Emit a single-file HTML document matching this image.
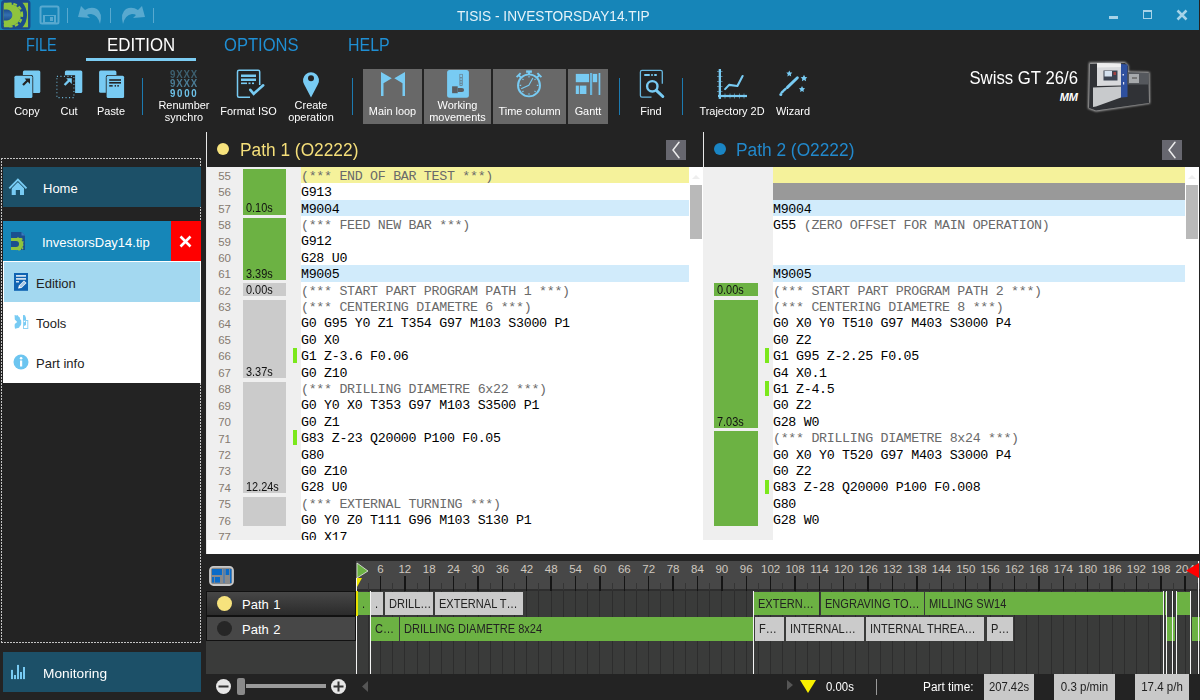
<!DOCTYPE html><html><head><meta charset="utf-8"><style>
*{margin:0;padding:0;box-sizing:border-box}
html,body{width:1200px;height:700px;overflow:hidden;background:#232323;font-family:"Liberation Sans",sans-serif;position:relative}
.a{position:absolute}
.t{position:absolute;white-space:nowrap;color:#fff}
.rl{position:absolute;font-size:11.5px;color:#fff;text-align:center;white-space:nowrap;line-height:12px;transform:scaleX(0.95)}
.btn{position:absolute;background:#686868;top:69px;height:55px}
.sep{position:absolute;top:78px;width:1px;height:37px;background:#1c7ab0}
.code{position:absolute;font-family:"Liberation Mono",monospace;font-size:13.3px;letter-spacing:-0.3px;line-height:16.4px;white-space:pre;color:#000}
.cm{color:#6a6a6a}
.ln{position:absolute;font-size:11.5px;color:#857a70;text-align:right;width:24px;line-height:16.4px}
.tb{position:absolute;font-size:12.5px;color:#111;line-height:13px;transform:scaleX(0.875);transform-origin:0 0;white-space:nowrap}
.tlbl{position:absolute;font-size:13px;color:#222;white-space:nowrap;line-height:24px;transform:scaleX(0.85);transform-origin:0 0}
</style></head><body>
<div class="a" style="left:0;top:0;width:1199px;height:30px;background:#1685b8"></div>
<svg class="a" style="left:0;top:0" width="31" height="31" viewBox="0 0 31 31">
<defs><clipPath id="lc"><rect x="3.7" y="2.5" width="24.5" height="25"/></clipPath>
<linearGradient id="lg" x1="0" y1="0" x2="0" y2="1"><stop offset="0" stop-color="#1e4f8e"/><stop offset="0.5" stop-color="#3370b0"/><stop offset="1" stop-color="#1e4f8e"/></linearGradient></defs>
<rect x="1" y="0" width="29.5" height="29.5" rx="3.5" fill="#1b4c8c"/>
<g clip-path="url(#lc)">
<rect x="3.7" y="2.5" width="8" height="25" fill="#8fc43e"/>
<circle cx="10.5" cy="15" r="10.6" fill="#8fc43e"/>
<circle cx="10.5" cy="15" r="11.6" fill="none" stroke="#8fc43e" stroke-width="2.2" stroke-dasharray="3.7 2.2" stroke-dashoffset="1.8"/>
<path d="M0 9.6 H7 A5.4 5.4 0 0 1 7 20.4 H0 Z" fill="url(#lg)"/>
<path d="M22.3 2.5 A19 19 0 0 1 22.3 27.5 L28.2 27.5 L28.2 2.5 Z" fill="#8fc43e"/>
</g>
</svg>
<svg class="a" style="left:39px;top:5px" width="22" height="21" viewBox="0 0 22 21">
<rect x="1.5" y="1.5" width="18" height="17" rx="1.5" fill="none" stroke="#58a9cf" stroke-width="2"/>
<rect x="4" y="10" width="13" height="8" fill="#58a9cf"/>
<rect x="6" y="11" width="9" height="6" fill="#1685b8"/>
<rect x="11" y="12" width="3" height="4" fill="#58a9cf"/>
</svg>
<div class="a" style="left:67px;top:8px;width:1px;height:15px;background:#58a9cf"></div>
<div class="a" style="left:110px;top:8px;width:1px;height:15px;background:#58a9cf"></div>
<div class="a" style="left:153px;top:8px;width:1px;height:15px;background:#58a9cf"></div>
<svg class="a" style="left:77px;top:5px" width="26" height="20" viewBox="0 0 26 20">
<path d="M1 12 L4 1 L8 5 Q14 1 20 4 Q26 8 23 19 Q21 10 14 9 Q11 9 10 10 L13 13 Z" fill="#58a9cf"/>
</svg>
<svg class="a" style="left:120px;top:5px" width="26" height="20" viewBox="0 0 26 20">
<g transform="translate(26,0) scale(-1,1)"><path d="M1 12 L4 1 L8 5 Q14 1 20 4 Q26 8 23 19 Q21 10 14 9 Q11 9 10 10 L13 13 Z" fill="#58a9cf"/></g>
</svg>
<div class="t" style="left:457px;top:7px;font-size:15px;color:#e6f3f9;line-height:17px;transform:scaleX(0.912);transform-origin:0 0">TISIS - INVESTORSDAY14.TIP</div>
<div class="a" style="left:1109px;top:16px;width:9px;height:3px;background:#a6d3e8"></div>
<div class="a" style="left:1143px;top:10px;width:9px;height:9px;border:1px solid #a6d3e8;border-top-width:2.5px"></div>
<svg class="a" style="left:1176px;top:9px" width="12" height="12" viewBox="0 0 12 12"><path d="M1.5 1.5 L10.5 10.5 M10.5 1.5 L1.5 10.5" stroke="#a6d3e8" stroke-width="2.5"/></svg>
<div class="t" style="left:26px;top:36px;font-size:18px;color:#1f8fd4;line-height:18px;transform:scaleX(0.81);transform-origin:0 0">FILE</div>
<div class="t" style="left:107px;top:36px;font-size:18px;color:#ffffff;line-height:18px;transform:scaleX(0.935);transform-origin:0 0">EDITION</div>
<div class="t" style="left:224px;top:36px;font-size:18px;color:#1f8fd4;line-height:18px;transform:scaleX(0.92);transform-origin:0 0">OPTIONS</div>
<div class="t" style="left:348px;top:36px;font-size:18px;color:#1f8fd4;line-height:18px;transform:scaleX(0.885);transform-origin:0 0">HELP</div>
<div class="a" style="left:86px;top:58px;width:110px;height:3px;background:#7ccdf3"></div>
<div class="btn" style="left:363px;width:59px"></div>
<div class="btn" style="left:424px;width:67px"></div>
<div class="btn" style="left:493px;width:73px"></div>
<div class="btn" style="left:568px;width:40px"></div>
<div class="sep" style="left:142px"></div>
<div class="sep" style="left:352px"></div>
<div class="sep" style="left:619px"></div>
<div class="sep" style="left:682px"></div>
<svg class="a" style="left:0;top:60px" width="830" height="45" viewBox="0 60 830 45">
<!-- copy -->
<rect x="22.9" y="70.6" width="17.4" height="22.4" rx="1.5" fill="#78cbf3"/>
<rect x="13.6" y="75" width="19.6" height="23.9" rx="2" fill="#232323"/>
<rect x="14.4" y="75.8" width="18" height="22.3" rx="1.5" fill="#78cbf3"/>
<path d="M23 85 L28.3 79.7" stroke="#232323" stroke-width="2.2"/>
<path d="M24.6 78.5 L30 78.5 L30 83.9 Z" fill="#232323"/>
<!-- cut -->
<rect x="64.9" y="70.6" width="17.4" height="22.4" rx="1.5" fill="#78cbf3"/>
<rect x="55.6" y="75.2" width="19.5" height="23.5" fill="#232323"/>
<rect x="56.9" y="76.4" width="17" height="21.2" fill="none" stroke="#78cbf3" stroke-width="1.1" stroke-dasharray="1.1 2.4" opacity="0.85"/>
<path d="M64.6 85 L69.9 79.7" stroke="#78cbf3" stroke-width="2.4"/>
<path d="M66.2 78.3 L71.8 78.3 L71.8 83.9 Z" fill="#78cbf3"/>
<!-- paste -->
<rect x="99.1" y="70.6" width="17.3" height="22.1" rx="1.5" fill="#78cbf3"/>
<rect x="105.8" y="75" width="19.1" height="23.7" rx="2" fill="#232323"/>
<rect x="106.6" y="75.8" width="17.5" height="22.1" rx="1.5" fill="#78cbf3"/>
<rect x="109.2" y="79.2" width="11.8" height="1.6" fill="#232323"/>
<rect x="109.2" y="82" width="11.8" height="1.6" fill="#232323"/>
<rect x="109.2" y="85.1" width="3.5" height="1.5" fill="#232323"/>
<rect x="114.6" y="85.1" width="1.4" height="1.5" fill="#232323"/>
<rect x="117.3" y="85.1" width="1.6" height="1.5" fill="#232323"/>
<!-- format iso -->
<path d="M250 97.3 H239 Q237.5 97.3 237.5 95.8 V71.8 Q237.5 70.3 239 70.3 H258.2 Q259.7 70.3 259.7 71.8 V85" fill="none" stroke="#78cbf3" stroke-width="1.5"/>
<rect x="241" y="74.5" width="15" height="2.5" fill="#78cbf3"/>
<rect x="241" y="78.5" width="15" height="2.5" fill="#78cbf3"/>
<rect x="241" y="82.5" width="6" height="1.6" fill="#78cbf3"/>
<rect x="248.5" y="82.5" width="2" height="1.6" fill="#78cbf3"/>
<rect x="252" y="82.5" width="2" height="1.6" fill="#78cbf3"/>
<path d="M250.3 89.8 L253.7 93.8 L263.2 85.3" stroke="#78cbf3" stroke-width="2.6" fill="none" stroke-linecap="round"/>
<!-- pin -->
<path d="M311 97.5 L304.2 84.5 A8 8 0 1 1 317.8 84.5 Z" fill="#78cbf3"/>
<circle cx="311" cy="78.3" r="3" fill="#232323"/>
<!-- main loop -->
<path d="M381 72 L391.8 78.3 L383.5 83.3 L383.5 96 L381 96 Z" fill="#78cbf3"/>
<path d="M405 72 L394.3 78.3 L402.5 83.3 L402.5 96 L405 96 Z" fill="#78cbf3"/>
<!-- working movements -->
<rect x="447.1" y="70.1" width="21.8" height="27.6" rx="2.5" fill="#78cbf3"/>
<rect x="452.1" y="86.3" width="5.6" height="6.9" fill="#5a5e62"/>
<path d="M457.7 87.9 H462 A2.05 2.05 0 0 1 462 92 H457.7 Z" fill="#5a5e62"/>
<rect x="459.8" y="74.3" width="2.6" height="11" fill="none" stroke="#6a7f8a" stroke-width="0.7"/>
<path d="M461 77 V86" stroke="#5a5e62" stroke-width="1.1" stroke-dasharray="1.6 1.2"/>
<!-- stopwatch -->
<circle cx="529" cy="85.4" r="11" fill="none" stroke="#78cbf3" stroke-width="1.9"/>
<rect x="526.1" y="70.4" width="5.8" height="2.4" fill="#78cbf3"/>
<rect x="528" y="72" width="2" height="3" fill="#78cbf3"/>
<path d="M516.6 77.2 L520.6 73.2 M518.6 75.2 L521.3 77.9 M541.4 77.2 L537.4 73.2 M539.4 75.2 L536.7 77.9" stroke="#78cbf3" stroke-width="1.9"/>
<path d="M529 76 V77.6 M529 93.2 V94.8 M519.6 85.4 H521.2 M536.8 85.4 H538.4 M522.4 78.8 L523.5 79.9 M535.6 78.8 L534.5 79.9 M522.4 92 L523.5 90.9 M535.6 92 L534.5 90.9" stroke="#78cbf3" stroke-width="1.1"/>
<path d="M521.2 88.8 L528.8 85.3 L532.9 78.1" stroke="#78cbf3" stroke-width="1.1" fill="none"/>
<!-- gantt -->
<rect x="575.8" y="73.9" width="13.3" height="8.3" fill="#78cbf3"/>
<rect x="575.8" y="85.6" width="3.1" height="8.4" fill="#78cbf3"/>
<rect x="579.8" y="85.6" width="6.6" height="8.4" fill="#78cbf3"/>
<rect x="590" y="73" width="2.2" height="22" fill="#6bb5da"/>
<rect x="592.8" y="73.9" width="4.4" height="8.3" fill="#78cbf3"/>
<rect x="598.6" y="73" width="1.7" height="22" fill="#78cbf3"/>
<!-- find -->
<path d="M651.5 97.1 H642 Q640.4 97.1 640.4 95.5 V72 Q640.4 70.4 642 70.4 H660.7 Q662.3 70.4 662.3 72 V83.7" fill="none" stroke="#68b8e0" stroke-width="1.3"/>
<rect x="644" y="74" width="6" height="2" rx="1" fill="#78cbf3"/>
<rect x="651" y="74" width="2" height="2" rx="1" fill="#78cbf3"/>
<rect x="654" y="74" width="3" height="2" rx="1" fill="#78cbf3"/>
<circle cx="652.3" cy="86.3" r="5.2" fill="none" stroke="#78cbf3" stroke-width="2.4"/>
<path d="M656.3 90.3 L662.8 96.5" stroke="#78cbf3" stroke-width="3" stroke-linecap="round"/>
<!-- trajectory -->
<rect x="718.7" y="69" width="2.3" height="29.9" fill="#78cbf3"/>
<rect x="718" y="94.9" width="29" height="2.2" fill="#78cbf3"/>
<path d="M717 71.5 H722.5 M717 76.5 H722.5 M717 81.5 H722.5 M717 86.5 H722.5 M717 91.5 H722.5 M725 93.5 V98.5 M730 93.5 V98.5 M734.5 93.5 V98.5 M739.5 93.5 V98.5 M744 93.5 V98.5" stroke="#78cbf3" stroke-width="0.9" opacity="0.6"/>
<path d="M725.1 89.1 L729.1 84.9 L737.4 86 L742.6 76" stroke="#78cbf3" stroke-width="2.1" fill="none" stroke-linecap="round" stroke-linejoin="round"/>
<!-- wizard -->
<path d="M787.4 87.4 L797.4 77.7" stroke="#78cbf3" stroke-width="2.9" stroke-linecap="round"/>
<path d="M783.6 90.6 L785.6 88.8 M781.6 92.6 L782.8 91.5" stroke="#78cbf3" stroke-width="2.4" stroke-linecap="round"/>
<circle cx="780.8" cy="94.5" r="1.5" fill="#78cbf3"/>
<path d="M789.3 70.4 L790.3 72.4 L792.3 72.6 L790.8 74.2 L791.2 76.4 L789.3 75.3 L787.4 76.4 L787.8 74.2 L786.3 72.6 L788.3 72.4 Z" fill="#78cbf3"/>
<path d="M804 74.8 L805.1 77 L807.3 77.2 L805.7 78.9 L806.1 81.2 L804 80.1 L801.9 81.2 L802.3 78.9 L800.7 77.2 L802.9 77 Z" fill="#78cbf3"/>
<path d="M802 86.1 L803 88.1 L805 88.3 L803.5 89.9 L803.9 92.1 L802 91 L800.1 92.1 L800.5 89.9 L799 88.3 L801 88.1 Z" fill="#78cbf3"/>
</svg>
<div class="a" style="left:170px;top:70px;width:40px;font-family:'Liberation Sans';font-weight:bold;font-size:11.8px;line-height:9.3px;white-space:nowrap;letter-spacing:1px;transform:scaleX(0.82);transform-origin:0 0"><div style="color:#3d6070">9XXX</div><div style="color:#4b7c95">9XXX</div><div style="color:#6ec3ea;letter-spacing:2.1px">9000</div></div>
<div class="rl" style="left:7px;top:105px;width:40px">Copy</div>
<div class="rl" style="left:49px;top:105px;width:40px">Cut</div>
<div class="rl" style="left:91px;top:105px;width:40px">Paste</div>
<div class="rl" style="left:149px;top:99px;width:70px">Renumber<br>synchro</div>
<div class="rl" style="left:211px;top:105px;width:75px">Format ISO</div>
<div class="rl" style="left:276px;top:99px;width:70px">Create<br>operation</div>
<div class="rl" style="left:362px;top:105px;width:61px">Main loop</div>
<div class="rl" style="left:424px;top:99px;width:67px">Working<br>movements</div>
<div class="rl" style="left:493px;top:105px;width:73px">Time column</div>
<div class="rl" style="left:568px;top:105px;width:40px">Gantt</div>
<div class="rl" style="left:631px;top:105px;width:40px">Find</div>
<div class="rl" style="left:696px;top:105px;width:72px">Trajectory 2D</div>
<div class="rl" style="left:773px;top:105px;width:40px">Wizard</div>
<div class="t" style="left:940px;top:68px;width:138px;text-align:right;font-size:18px;line-height:20px;transform:scaleX(0.93);transform-origin:100% 0">Swiss GT 26/6</div>
<div class="t" style="left:1000px;top:91px;width:78px;text-align:right;font-size:11px;font-style:italic;font-weight:bold;line-height:13px">MM</div>
<svg class="a" style="left:1080px;top:56px" width="76" height="60" viewBox="1080 56 76 60">
<defs><filter id="gl" x="-20%" y="-20%" width="140%" height="140%"><feGaussianBlur stdDeviation="1.3"/></filter></defs>
<path d="M1089 62.5 L1125 62 L1128.5 65.5 L1128.5 71.5 L1149.5 72 L1150 103.5 L1096 111.5 L1088 108.5 Z" fill="#e8e8e8" opacity="0.75" filter="url(#gl)"/>
<path d="M1090 64 L1125 63 L1128 66 L1128 72.5 L1148.5 73 L1149 103 L1096 110.5 L1089 108 Z" fill="#303236"/>
<path d="M1097 63 L1121 63.5 L1121 85.5 L1097 86 Z" fill="#d9dadc"/>
<path d="M1097 63 L1121 63.5 L1121 67 L1097 67.5 Z" fill="#eeeeee"/>
<rect x="1103.5" y="70.5" width="14" height="10" fill="#3c4452"/>
<rect x="1104.5" y="71" width="7.5" height="5.5" fill="#d5e2f0"/>
<rect x="1113.5" y="72" width="2.5" height="3" fill="#a04040"/>
<path d="M1093 87.5 L1121 86.5 L1121 97.5 L1096 106.5 L1093 107 Z" fill="#c8cacc"/>
<path d="M1121 64 L1127.5 64.5 L1127.5 97 L1121 97.5 Z" fill="#2e509f"/>
<rect x="1122.5" y="74" width="1.5" height="1.5" fill="#dde"/>
<rect x="1123" y="82" width="1.2" height="2.5" fill="#dde"/>
<path d="M1127.5 72.5 L1148.5 73 L1148.5 84.5 L1127.5 84.5 Z" fill="#55585d"/>
<path d="M1129 74 L1139 74 L1139 83 L1129 83 Z" fill="#a6a9ac"/>
<rect x="1132" y="77" width="5" height="2" fill="#777"/>
</svg>
<div class="a" style="left:1px;top:158px;width:200px;height:1px;background:repeating-linear-gradient(90deg,#c4c4c4 0 2px,transparent 2px 3px)"></div>
<div class="a" style="left:1px;top:642px;width:200px;height:1px;background:repeating-linear-gradient(90deg,#c4c4c4 0 2px,transparent 2px 3px)"></div>
<div class="a" style="left:1px;top:158px;width:1px;height:485px;background:repeating-linear-gradient(180deg,#c4c4c4 0 2px,transparent 2px 3px)"></div>
<div class="a" style="left:200px;top:158px;width:1px;height:485px;background:repeating-linear-gradient(180deg,#c4c4c4 0 2px,transparent 2px 3px)"></div>
<div class="a" style="left:3px;top:167px;width:198px;height:40px;background:#1c5068"></div>
<div class="t" style="left:43px;top:181px;font-size:13px;line-height:15px">Home</div>
<div class="a" style="left:3px;top:221px;width:168px;height:40px;background:#1686b8"></div>
<div class="a" style="left:171px;top:221px;width:30px;height:40px;background:#ff0000"></div>
<svg class="a" style="left:178px;top:234px" width="15" height="15" viewBox="0 0 15 15"><path d="M2.5 2.5 L12.5 12.5 M12.5 2.5 L2.5 12.5" stroke="#fff" stroke-width="2.6"/></svg>
<svg class="a" style="left:0;top:165px" width="40" height="100" viewBox="0 165 40 100">
<path d="M11.7 186.5 L17.9 181.8 L24 186.5 V195 H20 V190 H15.8 V195 H11.7 Z" fill="#78cbf3"/>
<path d="M8.6 189 L17.9 179.6 L27.2 189" stroke="#1c5068" stroke-width="3.6" fill="none"/>
<path d="M9.3 188.3 L17.9 179.6 L26.5 188.3" stroke="#78cbf3" stroke-width="1.9" fill="none"/>
<path d="M11 232 H21.5 L25 235.5 V250 H11 Z" fill="#1b4f8f"/>
<path d="M21.5 232 V235.5 H25 Z" fill="#3a7bc0"/>
<rect x="11" y="238" width="10" height="12" fill="#8fc43e"/>
<circle cx="18.5" cy="244" r="5" fill="#8fc43e"/>
<circle cx="18.5" cy="244" r="5.8" fill="none" stroke="#8fc43e" stroke-width="1.6" stroke-dasharray="2 1.6"/>
<path d="M11 241 H16 A3 3 0 0 1 16 247 H11 Z" fill="#1b4f8f"/>
<rect x="23.5" y="237" width="1.5" height="13" fill="#1b4f8f"/>
</svg>
<div class="t" style="left:42px;top:235px;font-size:13px;line-height:15px">InvestorsDay14.tip</div>
<div class="a" style="left:3px;top:261px;width:198px;height:122px;background:#ffffff"></div>
<div class="a" style="left:4px;top:262px;width:196px;height:40px;background:#a3d8f0"></div>
<svg class="a" style="left:13px;top:272px" width="16" height="20" viewBox="0 0 16 20">
<rect x="1" y="1" width="14" height="17.8" fill="#0f63b2"/>
<rect x="3" y="3.2" width="10" height="1.4" fill="#fff"/>
<rect x="3" y="6.2" width="10" height="1.4" fill="#fff"/>
<rect x="3" y="9.2" width="3" height="1.2" fill="#fff"/>
<path d="M5 16.5 L6 13.5 L11 8.5 L13.5 11 L8.5 16 Z" fill="#fff"/>
<path d="M6.3 14 L11 9.3 L12.7 11 L8 15.7 Z" fill="#0f63b2" opacity="0.35"/>
</svg>
<div class="t" style="left:36px;top:276px;font-size:13px;line-height:15px;color:#222">Edition</div>
<svg class="a" style="left:0;top:300px" width="40" height="40" viewBox="0 300 40 40">
<path d="M14.6 315 L16.5 315.5 L17.5 315 L18.5 316.5 L19.8 317.5 L20 319 L21.2 320.5 L21.3 323 L21 325 L19.8 326.3 L19 327.8 L17 328.3 L15 328.8 L14.6 326 L14.8 324 L17.2 322 L14.8 319.5 Z" fill="#78cbf3"/>
<path d="M23 315 L25 315.3 L26 318 L26 325 L24 326 L23 325 Z" fill="#78cbf3"/>
<rect x="23.5" y="320.5" width="4.3" height="8" fill="none" stroke="#8fd3f5" stroke-width="1"/>
<circle cx="24.5" cy="321.5" r="0.8" fill="#fff"/>
</svg>
<div class="t" style="left:36px;top:316px;font-size:13px;line-height:15px;color:#222">Tools</div>
<svg class="a" style="left:13px;top:354px" width="16" height="16" viewBox="0 0 16 16">
<circle cx="8" cy="8" r="7.5" fill="#6cc5f0"/>
<rect x="7" y="6.5" width="2.2" height="6" fill="#fff"/>
<circle cx="8.1" cy="4.2" r="1.3" fill="#fff"/>
</svg>
<div class="t" style="left:36px;top:356px;font-size:13px;line-height:15px;color:#222">Part info</div>
<div class="a" style="left:3px;top:652px;width:198px;height:40px;background:#1c5068"></div>
<svg class="a" style="left:0;top:650px" width="40" height="40" viewBox="0 650 40 40">
<rect x="11" y="669.9" width="2" height="9.2" fill="#78cbf3"/>
<rect x="14" y="675" width="2" height="4.1" fill="#78cbf3"/>
<rect x="17" y="664.9" width="2" height="14.2" fill="#78cbf3"/>
<rect x="20" y="672" width="2" height="7.1" fill="#78cbf3"/>
<rect x="23" y="667" width="2" height="12.1" fill="#78cbf3"/>
</svg>
<div class="t" style="left:43px;top:666px;font-size:13px;line-height:15px;transform:scaleX(1.055);transform-origin:0 0">Monitoring</div>
<div class="a" style="left:206px;top:132px;width:1px;height:422px;background:#e8e8e8"></div>
<div class="a" style="left:217px;top:143px;width:12px;height:12px;border-radius:50%;background:#f7e37d"></div>
<div class="t" style="left:240px;top:140px;font-size:18px;color:#f5df7a;line-height:20px;transform:scaleX(0.962);transform-origin:0 0">Path 1 (O2222)</div>
<div class="a" style="left:666px;top:140px;width:20px;height:20px;background:#67676f"></div>
<svg class="a" style="left:666px;top:140px" width="20" height="20" viewBox="0 0 20 20"><path d="M13 2.3 L7 10 L13 17.7" stroke="#ececec" stroke-width="1.5" fill="none" stroke-linecap="round"/></svg>
<div class="a" style="left:703px;top:132px;width:1px;height:36px;background:#e8e8e8"></div>
<div class="a" style="left:714px;top:143px;width:12px;height:12px;border-radius:50%;background:#1a85c4"></div>
<div class="t" style="left:736px;top:140px;font-size:18px;color:#2289cc;line-height:20px;transform:scaleX(0.962);transform-origin:0 0">Path 2 (O2222)</div>
<div class="a" style="left:1162px;top:140px;width:20px;height:20px;background:#67676f"></div>
<svg class="a" style="left:1162px;top:140px" width="20" height="20" viewBox="0 0 20 20"><path d="M13 2.3 L7 10 L13 17.7" stroke="#ececec" stroke-width="1.5" fill="none" stroke-linecap="round"/></svg>
<div class="a" style="left:207px;top:167px;width:993px;height:387px;background:#ffffff"></div>
<div class="a" style="left:207px;top:167px;width:94px;height:373px;background:#efefef"></div>
<div class="a" style="left:703px;top:167px;width:70px;height:373px;background:#efefef"></div>
<div class="a" style="left:301px;top:167.00px;width:388px;height:16.4px;background:#f5f29b"></div>
<div class="a" style="left:301px;top:199.80px;width:388px;height:16.4px;background:#d1ebfb"></div>
<div class="a" style="left:301px;top:265.40px;width:388px;height:16.4px;background:#d1ebfb"></div>
<div class="a" style="left:293px;top:348.40px;width:4px;height:14.4px;background:#7be81c"></div>
<div class="a" style="left:293px;top:430.40px;width:4px;height:14.4px;background:#7be81c"></div>
<div class="a" style="left:301px;top:167px;width:388px;height:373px;overflow:hidden"><div class="code" style="left:0;top:1.7px"><span class="cm">(*** END OF BAR TEST ***)</span>
G913
M9004
<span class="cm">(*** FEED NEW BAR ***)</span>
G912
G28 U0
M9005
<span class="cm">(*** START PART PROGRAM PATH 1 ***)</span>
<span class="cm">(*** CENTERING DIAMETRE 6 ***)</span>
G0 G95 Y0 Z1 T354 G97 M103 S3000 P1
G0 X0
G1 Z-3.6 F0.06
G0 Z10
<span class="cm">(*** DRILLING DIAMETRE 6x22 ***)</span>
G0 Y0 X0 T353 G97 M103 S3500 P1
G0 Z1
G83 Z-23 Q20000 P100 F0.05
G80
G0 Z10
G28 U0
<span class="cm">(*** EXTERNAL TURNING ***)</span>
G0 Y0 Z0 T111 G96 M103 S130 P1
G0 X17</div></div>
<div class="a" style="left:773px;top:167.00px;width:412px;height:16.4px;background:#f5f29b"></div>
<div class="a" style="left:773px;top:183.40px;width:412px;height:16.4px;background:#999999"></div>
<div class="a" style="left:773px;top:199.80px;width:412px;height:16.4px;background:#d1ebfb"></div>
<div class="a" style="left:773px;top:265.40px;width:412px;height:16.4px;background:#d1ebfb"></div>
<div class="a" style="left:765px;top:348.40px;width:4px;height:14.4px;background:#7be81c"></div>
<div class="a" style="left:765px;top:381.20px;width:4px;height:14.4px;background:#7be81c"></div>
<div class="a" style="left:765px;top:479.60px;width:4px;height:14.4px;background:#7be81c"></div>
<div class="a" style="left:773px;top:167px;width:412px;height:373px;overflow:hidden"><div class="code" style="left:0;top:1.7px">

M9004
G55 <span class="cm">(ZERO OFFSET FOR MAIN OPERATION)</span>


M9005
<span class="cm">(*** START PART PROGRAM PATH 2 ***)</span>
<span class="cm">(*** CENTERING DIAMETRE 8 ***)</span>
G0 X0 Y0 T510 G97 M403 S3000 P4
G0 Z2
G1 G95 Z-2.25 F0.05
G4 X0.1
G1 Z-4.5
G0 Z2
G28 W0
<span class="cm">(*** DRILLING DIAMETRE 8x24 ***)</span>
G0 X0 Y0 T520 G97 M403 S3000 P4
G0 Z2
G83 Z-28 Q20000 P100 F0.008
G80
G28 W0</div></div>
<div class="a" style="left:207px;top:167px;width:30px;height:373px;overflow:hidden"><div class="ln" style="left:0;top:1px">55<br>56<br>57<br>58<br>59<br>60<br>61<br>62<br>63<br>64<br>65<br>66<br>67<br>68<br>69<br>70<br>71<br>72<br>73<br>74<br>75<br>76<br>77</div></div>
<div class="a" style="left:242.5px;top:168.50px;width:43.8px;height:46.00px;background:#6cb243"></div><div class="tb" style="left:245.7px;top:202.30px">0.10s</div>
<div class="a" style="left:242.5px;top:217.70px;width:43.8px;height:62.40px;background:#6cb243"></div><div class="tb" style="left:245.7px;top:267.90px">3.39s</div>
<div class="a" style="left:242.5px;top:283.30px;width:43.8px;height:13.20px;background:#cbcbcb"></div><div class="tb" style="left:245.7px;top:284.30px">0.00s</div>
<div class="a" style="left:242.5px;top:299.70px;width:43.8px;height:78.80px;background:#cbcbcb"></div><div class="tb" style="left:245.7px;top:366.30px">3.37s</div>
<div class="a" style="left:242.5px;top:381.70px;width:43.8px;height:111.60px;background:#cbcbcb"></div><div class="tb" style="left:245.7px;top:481.10px">12.24s</div>
<div class="a" style="left:242.5px;top:496.50px;width:43.8px;height:29.60px;background:#cbcbcb"></div>
<div class="a" style="left:714px;top:283.30px;width:43.8px;height:13.20px;background:#6cb243"></div><div class="tb" style="left:717.2px;top:284.30px">0.00s</div>
<div class="a" style="left:714px;top:299.70px;width:43.8px;height:128.00px;background:#6cb243"></div><div class="tb" style="left:717.2px;top:415.50px">7.03s</div>
<div class="a" style="left:714px;top:430.90px;width:43.8px;height:95.20px;background:#6cb243"></div>
<div class="a" style="left:690px;top:185px;width:12px;height:54px;background:#b9b9b9"></div>
<div class="a" style="left:1186px;top:185px;width:12px;height:54px;background:#b9b9b9"></div>
<svg class="a" style="left:1186px;top:172px" width="12" height="8" viewBox="0 0 12 8"><path d="M2 7 L6 3 L10 7 Z" fill="#eeeeee"/></svg>
<svg class="a" style="left:690px;top:172px" width="12" height="8" viewBox="0 0 12 8"><path d="M2 7 L6 3 L10 7 Z" fill="#eeeeee"/></svg>
<div class="a" style="left:1199px;top:0;width:1px;height:700px;background:#232323"></div>
<div class="a" style="left:356px;top:561px;width:844px;height:30px;background:#474747"></div>
<div class="a" style="left:206px;top:591px;width:994px;height:83px;background:#3a3b3a"></div>
<div class="a" style="left:356px;top:589px;width:844px;height:2px;background:#2e2e2e"></div>
<div class="a" style="left:367.79px;top:591px;width:1px;height:83px;background:#2d2d2d"></div>
<div class="a" style="left:367.79px;top:583px;width:1px;height:7px;background:#353535"></div>
<div class="a" style="left:379.99px;top:591px;width:1px;height:83px;background:#2d2d2d"></div>
<div class="a" style="left:379.79px;top:576px;width:1.4px;height:15px;background:#151515"></div>
<div class="t" style="left:360.49px;top:563px;width:40px;text-align:center;font-size:11.5px;color:#cfc8bf;line-height:13px">6</div>
<div class="a" style="left:392.18px;top:591px;width:1px;height:83px;background:#2d2d2d"></div>
<div class="a" style="left:392.18px;top:583px;width:1px;height:7px;background:#353535"></div>
<div class="a" style="left:404.37px;top:591px;width:1px;height:83px;background:#2d2d2d"></div>
<div class="a" style="left:404.17px;top:576px;width:1.4px;height:15px;background:#151515"></div>
<div class="t" style="left:384.87px;top:563px;width:40px;text-align:center;font-size:11.5px;color:#cfc8bf;line-height:13px">12</div>
<div class="a" style="left:416.56px;top:591px;width:1px;height:83px;background:#2d2d2d"></div>
<div class="a" style="left:416.56px;top:583px;width:1px;height:7px;background:#353535"></div>
<div class="a" style="left:428.75px;top:591px;width:1px;height:83px;background:#2d2d2d"></div>
<div class="a" style="left:428.56px;top:576px;width:1.4px;height:15px;background:#151515"></div>
<div class="t" style="left:409.25px;top:563px;width:40px;text-align:center;font-size:11.5px;color:#cfc8bf;line-height:13px">18</div>
<div class="a" style="left:440.95px;top:591px;width:1px;height:83px;background:#2d2d2d"></div>
<div class="a" style="left:440.95px;top:583px;width:1px;height:7px;background:#353535"></div>
<div class="a" style="left:453.14px;top:591px;width:1px;height:83px;background:#2d2d2d"></div>
<div class="a" style="left:452.94px;top:576px;width:1.4px;height:15px;background:#151515"></div>
<div class="t" style="left:433.64px;top:563px;width:40px;text-align:center;font-size:11.5px;color:#cfc8bf;line-height:13px">24</div>
<div class="a" style="left:465.33px;top:591px;width:1px;height:83px;background:#2d2d2d"></div>
<div class="a" style="left:465.33px;top:583px;width:1px;height:7px;background:#353535"></div>
<div class="a" style="left:477.53px;top:591px;width:1px;height:83px;background:#2d2d2d"></div>
<div class="a" style="left:477.33px;top:576px;width:1.4px;height:15px;background:#151515"></div>
<div class="t" style="left:458.03px;top:563px;width:40px;text-align:center;font-size:11.5px;color:#cfc8bf;line-height:13px">30</div>
<div class="a" style="left:489.72px;top:591px;width:1px;height:83px;background:#2d2d2d"></div>
<div class="a" style="left:489.72px;top:583px;width:1px;height:7px;background:#353535"></div>
<div class="a" style="left:501.91px;top:591px;width:1px;height:83px;background:#2d2d2d"></div>
<div class="a" style="left:501.71px;top:576px;width:1.4px;height:15px;background:#151515"></div>
<div class="t" style="left:482.41px;top:563px;width:40px;text-align:center;font-size:11.5px;color:#cfc8bf;line-height:13px">36</div>
<div class="a" style="left:514.10px;top:591px;width:1px;height:83px;background:#2d2d2d"></div>
<div class="a" style="left:514.10px;top:583px;width:1px;height:7px;background:#353535"></div>
<div class="a" style="left:526.30px;top:591px;width:1px;height:83px;background:#2d2d2d"></div>
<div class="a" style="left:526.10px;top:576px;width:1.4px;height:15px;background:#151515"></div>
<div class="t" style="left:506.80px;top:563px;width:40px;text-align:center;font-size:11.5px;color:#cfc8bf;line-height:13px">42</div>
<div class="a" style="left:538.49px;top:591px;width:1px;height:83px;background:#2d2d2d"></div>
<div class="a" style="left:538.49px;top:583px;width:1px;height:7px;background:#353535"></div>
<div class="a" style="left:550.68px;top:591px;width:1px;height:83px;background:#2d2d2d"></div>
<div class="a" style="left:550.48px;top:576px;width:1.4px;height:15px;background:#151515"></div>
<div class="t" style="left:531.18px;top:563px;width:40px;text-align:center;font-size:11.5px;color:#cfc8bf;line-height:13px">48</div>
<div class="a" style="left:562.87px;top:591px;width:1px;height:83px;background:#2d2d2d"></div>
<div class="a" style="left:562.87px;top:583px;width:1px;height:7px;background:#353535"></div>
<div class="a" style="left:575.07px;top:591px;width:1px;height:83px;background:#2d2d2d"></div>
<div class="a" style="left:574.87px;top:576px;width:1.4px;height:15px;background:#151515"></div>
<div class="t" style="left:555.57px;top:563px;width:40px;text-align:center;font-size:11.5px;color:#cfc8bf;line-height:13px">54</div>
<div class="a" style="left:587.26px;top:591px;width:1px;height:83px;background:#2d2d2d"></div>
<div class="a" style="left:587.26px;top:583px;width:1px;height:7px;background:#353535"></div>
<div class="a" style="left:599.45px;top:591px;width:1px;height:83px;background:#2d2d2d"></div>
<div class="a" style="left:599.25px;top:576px;width:1.4px;height:15px;background:#151515"></div>
<div class="t" style="left:579.95px;top:563px;width:40px;text-align:center;font-size:11.5px;color:#cfc8bf;line-height:13px">60</div>
<div class="a" style="left:611.64px;top:591px;width:1px;height:83px;background:#2d2d2d"></div>
<div class="a" style="left:611.64px;top:583px;width:1px;height:7px;background:#353535"></div>
<div class="a" style="left:623.84px;top:591px;width:1px;height:83px;background:#2d2d2d"></div>
<div class="a" style="left:623.63px;top:576px;width:1.4px;height:15px;background:#151515"></div>
<div class="t" style="left:604.34px;top:563px;width:40px;text-align:center;font-size:11.5px;color:#cfc8bf;line-height:13px">66</div>
<div class="a" style="left:636.03px;top:591px;width:1px;height:83px;background:#2d2d2d"></div>
<div class="a" style="left:636.03px;top:583px;width:1px;height:7px;background:#353535"></div>
<div class="a" style="left:648.22px;top:591px;width:1px;height:83px;background:#2d2d2d"></div>
<div class="a" style="left:648.02px;top:576px;width:1.4px;height:15px;background:#151515"></div>
<div class="t" style="left:628.72px;top:563px;width:40px;text-align:center;font-size:11.5px;color:#cfc8bf;line-height:13px">72</div>
<div class="a" style="left:660.41px;top:591px;width:1px;height:83px;background:#2d2d2d"></div>
<div class="a" style="left:660.41px;top:583px;width:1px;height:7px;background:#353535"></div>
<div class="a" style="left:672.61px;top:591px;width:1px;height:83px;background:#2d2d2d"></div>
<div class="a" style="left:672.40px;top:576px;width:1.4px;height:15px;background:#151515"></div>
<div class="t" style="left:653.11px;top:563px;width:40px;text-align:center;font-size:11.5px;color:#cfc8bf;line-height:13px">78</div>
<div class="a" style="left:684.80px;top:591px;width:1px;height:83px;background:#2d2d2d"></div>
<div class="a" style="left:684.80px;top:583px;width:1px;height:7px;background:#353535"></div>
<div class="a" style="left:696.99px;top:591px;width:1px;height:83px;background:#2d2d2d"></div>
<div class="a" style="left:696.79px;top:576px;width:1.4px;height:15px;background:#151515"></div>
<div class="t" style="left:677.49px;top:563px;width:40px;text-align:center;font-size:11.5px;color:#cfc8bf;line-height:13px">84</div>
<div class="a" style="left:709.18px;top:591px;width:1px;height:83px;background:#2d2d2d"></div>
<div class="a" style="left:709.18px;top:583px;width:1px;height:7px;background:#353535"></div>
<div class="a" style="left:721.38px;top:591px;width:1px;height:83px;background:#2d2d2d"></div>
<div class="a" style="left:721.17px;top:576px;width:1.4px;height:15px;background:#151515"></div>
<div class="t" style="left:701.88px;top:563px;width:40px;text-align:center;font-size:11.5px;color:#cfc8bf;line-height:13px">90</div>
<div class="a" style="left:733.57px;top:591px;width:1px;height:83px;background:#2d2d2d"></div>
<div class="a" style="left:733.57px;top:583px;width:1px;height:7px;background:#353535"></div>
<div class="a" style="left:745.76px;top:591px;width:1px;height:83px;background:#2d2d2d"></div>
<div class="a" style="left:745.56px;top:576px;width:1.4px;height:15px;background:#151515"></div>
<div class="t" style="left:726.26px;top:563px;width:40px;text-align:center;font-size:11.5px;color:#cfc8bf;line-height:13px">96</div>
<div class="a" style="left:757.95px;top:591px;width:1px;height:83px;background:#2d2d2d"></div>
<div class="a" style="left:757.95px;top:583px;width:1px;height:7px;background:#353535"></div>
<div class="a" style="left:770.14px;top:591px;width:1px;height:83px;background:#2d2d2d"></div>
<div class="a" style="left:769.94px;top:576px;width:1.4px;height:15px;background:#151515"></div>
<div class="t" style="left:750.64px;top:563px;width:40px;text-align:center;font-size:11.5px;color:#cfc8bf;line-height:13px">102</div>
<div class="a" style="left:782.34px;top:591px;width:1px;height:83px;background:#2d2d2d"></div>
<div class="a" style="left:782.34px;top:583px;width:1px;height:7px;background:#353535"></div>
<div class="a" style="left:794.53px;top:591px;width:1px;height:83px;background:#2d2d2d"></div>
<div class="a" style="left:794.33px;top:576px;width:1.4px;height:15px;background:#151515"></div>
<div class="t" style="left:775.03px;top:563px;width:40px;text-align:center;font-size:11.5px;color:#cfc8bf;line-height:13px">108</div>
<div class="a" style="left:806.72px;top:591px;width:1px;height:83px;background:#2d2d2d"></div>
<div class="a" style="left:806.72px;top:583px;width:1px;height:7px;background:#353535"></div>
<div class="a" style="left:818.92px;top:591px;width:1px;height:83px;background:#2d2d2d"></div>
<div class="a" style="left:818.72px;top:576px;width:1.4px;height:15px;background:#151515"></div>
<div class="t" style="left:799.42px;top:563px;width:40px;text-align:center;font-size:11.5px;color:#cfc8bf;line-height:13px">114</div>
<div class="a" style="left:831.11px;top:591px;width:1px;height:83px;background:#2d2d2d"></div>
<div class="a" style="left:831.11px;top:583px;width:1px;height:7px;background:#353535"></div>
<div class="a" style="left:843.30px;top:591px;width:1px;height:83px;background:#2d2d2d"></div>
<div class="a" style="left:843.10px;top:576px;width:1.4px;height:15px;background:#151515"></div>
<div class="t" style="left:823.80px;top:563px;width:40px;text-align:center;font-size:11.5px;color:#cfc8bf;line-height:13px">120</div>
<div class="a" style="left:855.49px;top:591px;width:1px;height:83px;background:#2d2d2d"></div>
<div class="a" style="left:855.49px;top:583px;width:1px;height:7px;background:#353535"></div>
<div class="a" style="left:867.69px;top:591px;width:1px;height:83px;background:#2d2d2d"></div>
<div class="a" style="left:867.49px;top:576px;width:1.4px;height:15px;background:#151515"></div>
<div class="t" style="left:848.19px;top:563px;width:40px;text-align:center;font-size:11.5px;color:#cfc8bf;line-height:13px">126</div>
<div class="a" style="left:879.88px;top:591px;width:1px;height:83px;background:#2d2d2d"></div>
<div class="a" style="left:879.88px;top:583px;width:1px;height:7px;background:#353535"></div>
<div class="a" style="left:892.07px;top:591px;width:1px;height:83px;background:#2d2d2d"></div>
<div class="a" style="left:891.87px;top:576px;width:1.4px;height:15px;background:#151515"></div>
<div class="t" style="left:872.57px;top:563px;width:40px;text-align:center;font-size:11.5px;color:#cfc8bf;line-height:13px">132</div>
<div class="a" style="left:904.26px;top:591px;width:1px;height:83px;background:#2d2d2d"></div>
<div class="a" style="left:904.26px;top:583px;width:1px;height:7px;background:#353535"></div>
<div class="a" style="left:916.46px;top:591px;width:1px;height:83px;background:#2d2d2d"></div>
<div class="a" style="left:916.25px;top:576px;width:1.4px;height:15px;background:#151515"></div>
<div class="t" style="left:896.96px;top:563px;width:40px;text-align:center;font-size:11.5px;color:#cfc8bf;line-height:13px">138</div>
<div class="a" style="left:928.65px;top:591px;width:1px;height:83px;background:#2d2d2d"></div>
<div class="a" style="left:928.65px;top:583px;width:1px;height:7px;background:#353535"></div>
<div class="a" style="left:940.84px;top:591px;width:1px;height:83px;background:#2d2d2d"></div>
<div class="a" style="left:940.64px;top:576px;width:1.4px;height:15px;background:#151515"></div>
<div class="t" style="left:921.34px;top:563px;width:40px;text-align:center;font-size:11.5px;color:#cfc8bf;line-height:13px">144</div>
<div class="a" style="left:953.03px;top:591px;width:1px;height:83px;background:#2d2d2d"></div>
<div class="a" style="left:953.03px;top:583px;width:1px;height:7px;background:#353535"></div>
<div class="a" style="left:965.23px;top:591px;width:1px;height:83px;background:#2d2d2d"></div>
<div class="a" style="left:965.02px;top:576px;width:1.4px;height:15px;background:#151515"></div>
<div class="t" style="left:945.73px;top:563px;width:40px;text-align:center;font-size:11.5px;color:#cfc8bf;line-height:13px">150</div>
<div class="a" style="left:977.42px;top:591px;width:1px;height:83px;background:#2d2d2d"></div>
<div class="a" style="left:977.42px;top:583px;width:1px;height:7px;background:#353535"></div>
<div class="a" style="left:989.61px;top:591px;width:1px;height:83px;background:#2d2d2d"></div>
<div class="a" style="left:989.41px;top:576px;width:1.4px;height:15px;background:#151515"></div>
<div class="t" style="left:970.11px;top:563px;width:40px;text-align:center;font-size:11.5px;color:#cfc8bf;line-height:13px">156</div>
<div class="a" style="left:1001.80px;top:591px;width:1px;height:83px;background:#2d2d2d"></div>
<div class="a" style="left:1001.80px;top:583px;width:1px;height:7px;background:#353535"></div>
<div class="a" style="left:1014.00px;top:591px;width:1px;height:83px;background:#2d2d2d"></div>
<div class="a" style="left:1013.80px;top:576px;width:1.4px;height:15px;background:#151515"></div>
<div class="t" style="left:994.50px;top:563px;width:40px;text-align:center;font-size:11.5px;color:#cfc8bf;line-height:13px">162</div>
<div class="a" style="left:1026.19px;top:591px;width:1px;height:83px;background:#2d2d2d"></div>
<div class="a" style="left:1026.19px;top:583px;width:1px;height:7px;background:#353535"></div>
<div class="a" style="left:1038.38px;top:591px;width:1px;height:83px;background:#2d2d2d"></div>
<div class="a" style="left:1038.18px;top:576px;width:1.4px;height:15px;background:#151515"></div>
<div class="t" style="left:1018.88px;top:563px;width:40px;text-align:center;font-size:11.5px;color:#cfc8bf;line-height:13px">168</div>
<div class="a" style="left:1050.57px;top:591px;width:1px;height:83px;background:#2d2d2d"></div>
<div class="a" style="left:1050.57px;top:583px;width:1px;height:7px;background:#353535"></div>
<div class="a" style="left:1062.77px;top:591px;width:1px;height:83px;background:#2d2d2d"></div>
<div class="a" style="left:1062.57px;top:576px;width:1.4px;height:15px;background:#151515"></div>
<div class="t" style="left:1043.27px;top:563px;width:40px;text-align:center;font-size:11.5px;color:#cfc8bf;line-height:13px">174</div>
<div class="a" style="left:1074.96px;top:591px;width:1px;height:83px;background:#2d2d2d"></div>
<div class="a" style="left:1074.96px;top:583px;width:1px;height:7px;background:#353535"></div>
<div class="a" style="left:1087.15px;top:591px;width:1px;height:83px;background:#2d2d2d"></div>
<div class="a" style="left:1086.95px;top:576px;width:1.4px;height:15px;background:#151515"></div>
<div class="t" style="left:1067.65px;top:563px;width:40px;text-align:center;font-size:11.5px;color:#cfc8bf;line-height:13px">180</div>
<div class="a" style="left:1099.34px;top:591px;width:1px;height:83px;background:#2d2d2d"></div>
<div class="a" style="left:1099.34px;top:583px;width:1px;height:7px;background:#353535"></div>
<div class="a" style="left:1111.54px;top:591px;width:1px;height:83px;background:#2d2d2d"></div>
<div class="a" style="left:1111.34px;top:576px;width:1.4px;height:15px;background:#151515"></div>
<div class="t" style="left:1092.04px;top:563px;width:40px;text-align:center;font-size:11.5px;color:#cfc8bf;line-height:13px">186</div>
<div class="a" style="left:1123.73px;top:591px;width:1px;height:83px;background:#2d2d2d"></div>
<div class="a" style="left:1123.73px;top:583px;width:1px;height:7px;background:#353535"></div>
<div class="a" style="left:1135.92px;top:591px;width:1px;height:83px;background:#2d2d2d"></div>
<div class="a" style="left:1135.72px;top:576px;width:1.4px;height:15px;background:#151515"></div>
<div class="t" style="left:1116.42px;top:563px;width:40px;text-align:center;font-size:11.5px;color:#cfc8bf;line-height:13px">192</div>
<div class="a" style="left:1148.11px;top:591px;width:1px;height:83px;background:#2d2d2d"></div>
<div class="a" style="left:1148.11px;top:583px;width:1px;height:7px;background:#353535"></div>
<div class="a" style="left:1160.31px;top:591px;width:1px;height:83px;background:#2d2d2d"></div>
<div class="a" style="left:1160.11px;top:576px;width:1.4px;height:15px;background:#151515"></div>
<div class="t" style="left:1140.81px;top:563px;width:40px;text-align:center;font-size:11.5px;color:#cfc8bf;line-height:13px">198</div>
<div class="a" style="left:1172.50px;top:591px;width:1px;height:83px;background:#2d2d2d"></div>
<div class="a" style="left:1172.50px;top:583px;width:1px;height:7px;background:#353535"></div>
<div class="a" style="left:1184.69px;top:591px;width:1px;height:83px;background:#2d2d2d"></div>
<div class="a" style="left:1184.49px;top:576px;width:1.4px;height:15px;background:#151515"></div>
<div class="t" style="left:1165.19px;top:563px;width:40px;text-align:center;font-size:11.5px;color:#cfc8bf;line-height:13px">204</div>
<div class="a" style="left:1196.88px;top:591px;width:1px;height:83px;background:#2d2d2d"></div>
<div class="a" style="left:1196.88px;top:583px;width:1px;height:7px;background:#353535"></div>
<div class="a" style="left:206px;top:591px;width:150px;height:25px;background:linear-gradient(#474747,#2b2b2b);border:1px solid #111"></div>
<div class="a" style="left:206px;top:616px;width:150px;height:25px;background:#474747;border:1px solid #111"></div>
<div class="a" style="left:217px;top:596px;width:15px;height:15px;border-radius:50%;background:#f7e37d"></div>
<div class="a" style="left:217px;top:621px;width:15px;height:15px;border-radius:50%;background:#262626"></div>
<div class="t" style="left:242px;top:597px;font-size:13px;line-height:15px;word-spacing:1px">Path 1</div>
<div class="t" style="left:242px;top:622px;font-size:13px;line-height:15px;word-spacing:1px">Path 2</div>
<svg class="a" style="left:205px;top:560px" width="35" height="32" viewBox="205 560 35 32">
<rect x="210" y="566.8" width="23" height="18.2" rx="3.5" fill="#8a8a8a" stroke="#c9c9c9" stroke-width="1.8"/>
<rect x="212" y="569" width="10" height="6" fill="#0a6bc8"/>
<rect x="212" y="577" width="2.2" height="5.6" fill="#0a6bc8"/>
<rect x="215" y="577" width="5" height="5.6" fill="#0a6bc8"/>
<rect x="223" y="569" width="2" height="14" fill="#5a7fa8"/>
<rect x="225.6" y="569" width="3.6" height="6" fill="#0a6bc8"/>
<rect x="230" y="569" width="1.4" height="14" fill="#0a6bc8"/>
</svg>
<div class="a" style="left:358px;top:591.5px;width:11.5px;height:23.5px;background:#6cb243;overflow:hidden"><div class="tlbl" style="left:4px;top:0">.</div></div>
<div class="a" style="left:370.5px;top:591.5px;width:12.5px;height:23.5px;background:#cbcbcb;overflow:hidden"><div class="tlbl" style="left:4px;top:0">.</div></div>
<div class="a" style="left:385px;top:591.5px;width:48px;height:23.5px;background:#cbcbcb;overflow:hidden"><div class="tlbl" style="left:4px;top:0">DRILL…</div></div>
<div class="a" style="left:435px;top:591.5px;width:88px;height:23.5px;background:#cbcbcb;overflow:hidden"><div class="tlbl" style="left:4px;top:0">EXTERNAL T…</div></div>
<div class="a" style="left:754px;top:591.5px;width:65px;height:23.5px;background:#6cb243;overflow:hidden"><div class="tlbl" style="left:4px;top:0">EXTERN…</div></div>
<div class="a" style="left:821px;top:591.5px;width:103px;height:23.5px;background:#6cb243;overflow:hidden"><div class="tlbl" style="left:4px;top:0">ENGRAVING TO…</div></div>
<div class="a" style="left:925px;top:591.5px;width:238px;height:23.5px;background:#6cb243;overflow:hidden"><div class="tlbl" style="left:4px;top:0">MILLING SW14</div></div>
<div class="a" style="left:1164.9px;top:591.5px;width:1.599999999999909px;height:23.5px;background:#6cb243;overflow:hidden"><div class="tlbl" style="left:4px;top:0"></div></div>
<div class="a" style="left:1177px;top:591.5px;width:13.099999999999909px;height:23.5px;background:#6cb243;overflow:hidden"><div class="tlbl" style="left:4px;top:0"></div></div>
<div class="a" style="left:370.5px;top:617px;width:28.0px;height:23.5px;background:#6cb243;overflow:hidden"><div class="tlbl" style="left:4px;top:0">C…</div></div>
<div class="a" style="left:400px;top:617px;width:353px;height:23.5px;background:#6cb243;overflow:hidden"><div class="tlbl" style="left:4px;top:0">DRILLING DIAMETRE 8x24</div></div>
<div class="a" style="left:755px;top:617px;width:29px;height:23.5px;background:#cbcbcb;overflow:hidden"><div class="tlbl" style="left:4px;top:0">F…</div></div>
<div class="a" style="left:786px;top:617px;width:78px;height:23.5px;background:#cbcbcb;overflow:hidden"><div class="tlbl" style="left:4px;top:0">INTERNAL…</div></div>
<div class="a" style="left:866px;top:617px;width:118px;height:23.5px;background:#cbcbcb;overflow:hidden"><div class="tlbl" style="left:4px;top:0">INTERNAL THREA…</div></div>
<div class="a" style="left:987px;top:617px;width:26px;height:23.5px;background:#cbcbcb;overflow:hidden"><div class="tlbl" style="left:4px;top:0">P…</div></div>
<div class="a" style="left:1167px;top:617px;width:8.099999999999909px;height:23.5px;background:#6cb243;overflow:hidden"><div class="tlbl" style="left:4px;top:0"></div></div>
<div class="a" style="left:1191.8px;top:617px;width:8.200000000000045px;height:23.5px;background:#6cb243;overflow:hidden"><div class="tlbl" style="left:4px;top:0"></div></div>
<div class="a" style="left:356px;top:578px;width:1.3px;height:13px;background:#f4f4f4"></div>
<div class="a" style="left:356.0px;top:591px;width:1.3px;height:83px;background:#f4f4f4"></div>
<div class="a" style="left:369.5px;top:591px;width:1.3px;height:83px;background:#f4f4f4"></div>
<div class="a" style="left:753.0px;top:591px;width:1.3px;height:83px;background:#f4f4f4"></div>
<div class="a" style="left:1163.0px;top:591px;width:1.3px;height:83px;background:#f4f4f4"></div>
<div class="a" style="left:1165.5px;top:591px;width:1.3px;height:83px;background:#f4f4f4"></div>
<div class="a" style="left:1171.7px;top:591px;width:1.3px;height:83px;background:#f4f4f4"></div>
<div class="a" style="left:1175.9px;top:591px;width:1.3px;height:83px;background:#f4f4f4"></div>
<div class="a" style="left:1190.0px;top:591px;width:1.3px;height:83px;background:#f4f4f4"></div>
<div class="a" style="left:1197.5px;top:591px;width:1.3px;height:83px;background:#f4f4f4"></div>
<div class="a" style="left:356px;top:591px;width:1.5px;height:25px;background:#e8e000"></div>
<svg class="a" style="left:356px;top:562px" width="14" height="28" viewBox="0 0 14 28"><path d="M1 1 L12 9 L1 16 Z" fill="#6cb243" stroke="#e8e8e8" stroke-width="0.8"/><path d="M1 16 L6 16 L1 25 Z" fill="#f0e800"/></svg>
<div class="a" style="left:1197.8px;top:561px;width:1.3px;height:30px;background:#f4f4f4"></div>
<svg class="a" style="left:1185px;top:562px" width="15" height="17" viewBox="0 0 15 17"><path d="M14 1 L1 8.5 L14 16 Z" fill="#ff0000"/></svg>
<svg class="a" style="left:215px;top:678px" width="132" height="18" viewBox="0 0 132 18">
<circle cx="8.5" cy="8.5" r="7.5" fill="#e6e6e6"/><rect x="3.5" y="7.5" width="10" height="2" fill="#333"/>
<rect x="22" y="0" width="8" height="17" rx="2" fill="#8a8a8a"/>
<rect x="31" y="6" width="80" height="4" fill="#9a9a9a"/>
<circle cx="123.5" cy="8.5" r="7.5" fill="#e6e6e6"/><rect x="118.5" y="7.5" width="10" height="2" fill="#333"/><rect x="122.5" y="3.5" width="2" height="10" fill="#333"/>
</svg>
<svg class="a" style="left:361px;top:680px" width="8" height="13" viewBox="0 0 8 13"><path d="M7 1 L1 6.5 L7 12 Z" fill="#555"/></svg>
<svg class="a" style="left:786px;top:679px" width="8" height="13" viewBox="0 0 8 13"><path d="M1 1 L7 6 L1 11 Z" fill="#555"/></svg>
<svg class="a" style="left:799px;top:679px" width="18" height="15" viewBox="0 0 18 15"><path d="M1 1 H17 L9 14 Z" fill="#f8f000"/></svg>
<div class="t" style="left:826px;top:680px;font-size:12.5px;line-height:14px;transform:scaleX(0.91);transform-origin:0 0">0.00s</div>
<div class="a" style="left:876px;top:679px;width:1px;height:16px;background:#999"></div>
<div class="t" style="left:923px;top:680px;font-size:12.5px;line-height:14px;transform:scaleX(0.945);transform-origin:0 0">Part time:</div>
<div class="a" style="left:984px;top:674px;width:50px;height:26px;background:#c9c9c9"></div>
<div class="t" style="left:984px;top:680px;width:50px;text-align:center;font-size:12.5px;line-height:14px;color:#222;transform:scaleX(0.9)">207.42s</div>
<div class="a" style="left:1054px;top:674px;width:61px;height:26px;background:#c9c9c9"></div>
<div class="t" style="left:1054px;top:680px;width:61px;text-align:center;font-size:12.5px;line-height:14px;color:#222;transform:scaleX(0.92)">0.3 p/min</div>
<div class="a" style="left:1135px;top:674px;width:54px;height:26px;background:#c9c9c9"></div>
<div class="t" style="left:1135px;top:680px;width:54px;text-align:center;font-size:12.5px;line-height:14px;color:#222;transform:scaleX(0.92)">17.4 p/h</div>
</body></html>
